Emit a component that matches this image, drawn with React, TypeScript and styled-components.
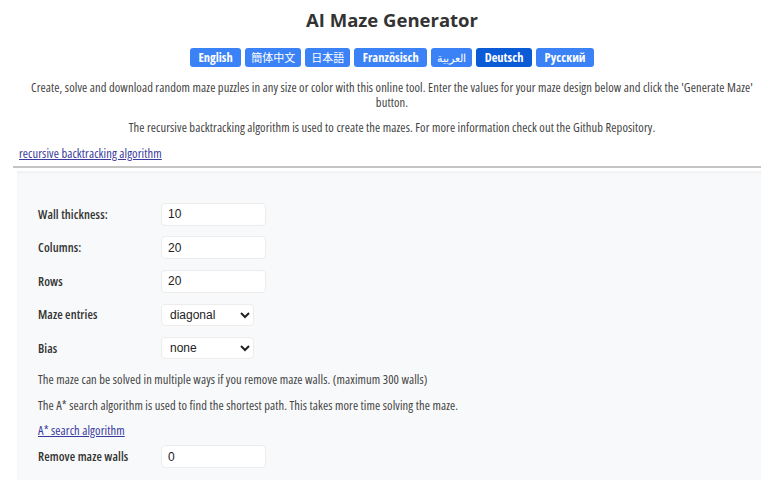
import React from 'react';
import styled, { createGlobalStyle } from 'styled-components';

const GlobalStyle = createGlobalStyle`
  html, body {
    margin: 0;
    padding: 0;
    background: #ffffff;
    overflow-x: hidden;
  }
  body {
    font-family: "Open Sans", "Noto Sans", sans-serif;
    font-stretch: condensed;
    color: #444;
  }
`;

const languages = [
  { label: 'English' },
  { label: '簡体中文', cjk: true },
  { label: '日本語', cjk: true },
  { label: 'Französisch' },
  { label: 'العربية', cjk: true },
  { label: 'Deutsch', active: true },
  { label: 'Русский' },
];

const Page = styled.div`
  width: 758px;
  margin-left: 13px;
  padding-top: 8px;
`;

const Title = styled.h1`
  margin: 0;
  text-align: center;
  font-size: 18.5px;
  line-height: 24px;
  font-weight: 700;
  font-stretch: normal;
  color: #333;
`;

const LangBar = styled.div`
  display: flex;
  justify-content: center;
  gap: 4px;
  margin-top: 16px;
`;

const LangButton = styled.button<{ $active?: boolean; $cjk?: boolean }>`
  height: 19px;
  padding: 0 ${p => (p.$cjk ? 6 : 8.5)}px;
  border: none;
  border-radius: 3px;
  background: ${p => (p.$active ? '#0b5ad6' : '#3b82f6')};
  color: #fff;
  font-family: "Open Sans", "Noto Sans CJK JP", "Noto Sans", sans-serif;
  font-stretch: condensed;
  font-size: ${p => (p.$cjk ? 11 : 12.5)}px;
  font-weight: ${p => (p.$cjk ? 400 : 700)};
  line-height: 19px;
  cursor: pointer;
`;

const Intro = styled.p<{ $top: number }>`
  margin: ${p => p.$top}px 0 0;
  padding: 0 12px;
  text-align: center;
  font-size: 12.5px;
  letter-spacing: 0.1px;
  line-height: 15px;
  color: #444;
`;

const TextLink = styled.a<{ $top: number; $indent: number }>`
  display: block;
  width: max-content;
  margin: ${p => p.$top}px 0 0 ${p => p.$indent}px;
  font-size: 12.5px;
  letter-spacing: 0.1px;
  line-height: 15px;
  color: #3a3a9e;
  text-decoration: underline;
`;

const Divider = styled.hr`
  margin: 5.5px 0 0;
  border: none;
  border-top: 2px solid #c4c4c4;
  height: 0;
`;

const Panel = styled.form`
  margin: 3px 0 0 4px;
  padding: 31.5px 0 14px 21px;
  background: #f8f9fa;
  box-shadow: inset 0 3px 4px -2px rgba(0, 0, 0, 0.05);
  display: flex;
  flex-direction: column;
`;

const Fields = styled.div`
  display: flex;
  flex-direction: column;
  gap: 10px;
`;

const Row = styled.label<{ $top?: number }>`
  display: grid;
  grid-template-columns: 123px auto;
  align-items: center;
  min-height: 23.5px;
  margin-top: ${p => p.$top ?? 0}px;
`;

const Label = styled.span`
  font-size: 12.5px;
  letter-spacing: 0.1px;
  font-weight: 600;
  color: #333;
`;

const TextInput = styled.input`
  box-sizing: border-box;
  width: 105px;
  height: 23px;
  padding: 0 6px;
  border: 1px solid #ececec;
  border-radius: 4px;
  background: #fff;
  font-family: "Liberation Sans Narrow", "Liberation Sans", sans-serif;
  font-size: 12px;
  color: #222;
  outline: none;
`;

const Select = styled.select`
  box-sizing: border-box;
  width: 93px;
  height: 22px;
  padding: 0 0 0 4px;
  border: 1px solid #ececec;
  border-radius: 4px;
  background: #fff;
  font-family: "Liberation Sans Narrow", "Liberation Sans", sans-serif;
  font-size: 12px;
  color: #222;
  outline: none;
`;

const Note = styled.p<{ $top: number }>`
  margin: ${p => p.$top}px 0 0;
  font-size: 12.5px;
  letter-spacing: 0.1px;
  line-height: 15px;
  color: #444;
`;

export default function App() {
  return (
    <Page>
      <GlobalStyle />
      <Title>AI Maze Generator</Title>
      <LangBar>
        {languages.map(l => (
          <LangButton key={l.label} $active={l.active} $cjk={l.cjk}>
            {l.label}
          </LangButton>
        ))}
      </LangBar>
      <Intro $top={12.5}>
        Create, solve and download random maze puzzles in any size or color with this online tool. Enter the values for
        your maze design below and click the 'Generate Maze' button.
      </Intro>
      <Intro $top={10}>
        The recursive backtracking algorithm is used to create the mazes. For more information check out the Github
        Repository.
      </Intro>
      <TextLink $top={11} $indent={6} href="#">
        recursive backtracking algorithm
      </TextLink>
      <Divider />
      <Panel onSubmit={e => e.preventDefault()}>
        <Fields>
          <Row>
            <Label>Wall thickness:</Label>
            <TextInput defaultValue="10" />
          </Row>
          <Row>
            <Label>Columns:</Label>
            <TextInput defaultValue="20" />
          </Row>
          <Row>
            <Label>Rows</Label>
            <TextInput defaultValue="20" />
          </Row>
          <Row>
            <Label>Maze entries</Label>
            <Select defaultValue="diagonal">
              <option value="diagonal">diagonal</option>
              <option value="none">none</option>
            </Select>
          </Row>
          <Row>
            <Label>Bias</Label>
            <Select defaultValue="none">
              <option value="none">none</option>
              <option value="horizontal">horizontal</option>
              <option value="vertical">vertical</option>
            </Select>
          </Row>
        </Fields>
        <Note $top={12}>The maze can be solved in multiple ways if you remove maze walls. (maximum 300 walls)</Note>
        <Note $top={11}>
          The A* search algorithm is used to find the shortest path. This takes more time solving the maze.
        </Note>
        <TextLink $top={10} $indent={0} href="#">
          A* search algorithm
        </TextLink>
        <Row $top={7}>
          <Label>Remove maze walls</Label>
          <TextInput defaultValue="0" />
        </Row>
      </Panel>
    </Page>
  );
}
